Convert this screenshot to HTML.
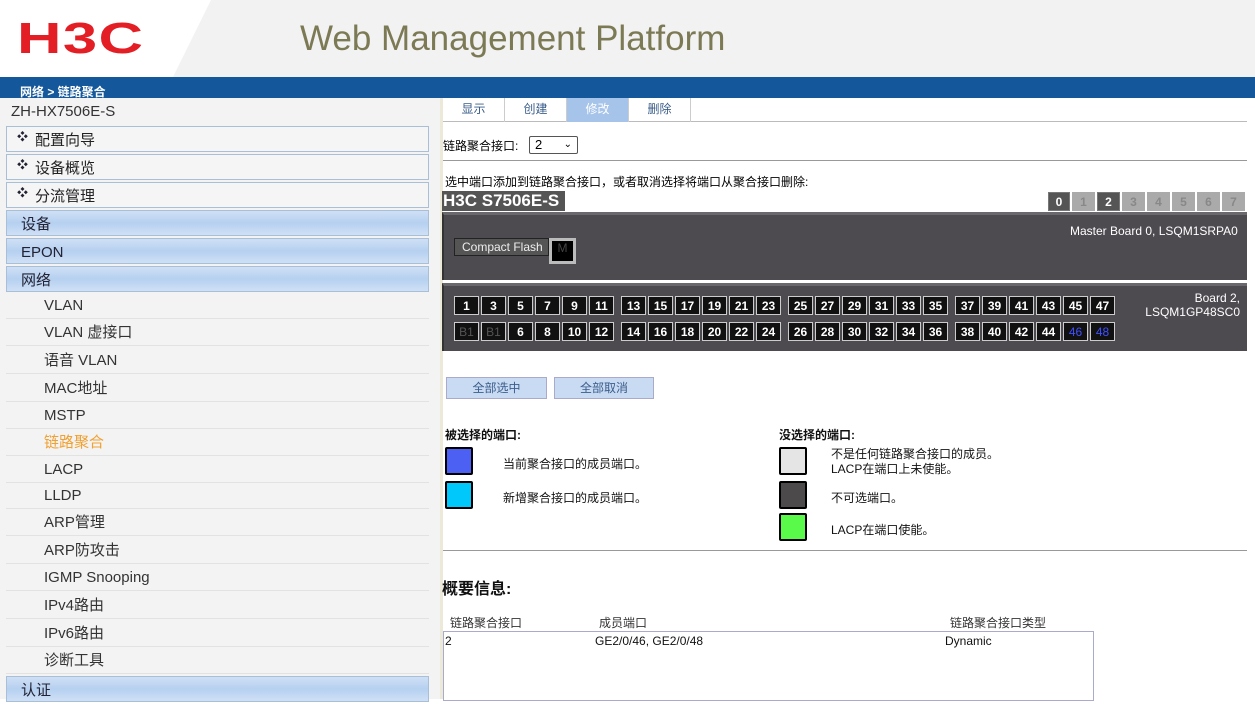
<!DOCTYPE html>
<html><head><meta charset="utf-8"><style>
*{margin:0;padding:0;box-sizing:border-box}
body{width:1255px;height:699px;overflow:hidden;background:#fff;font-family:"Liberation Sans","Noto Sans CJK SC",sans-serif;position:relative;font-size:12px;color:#000}
.a{position:absolute}
.side{left:0;top:98px;width:440px;height:601px;background:#f3f3f3}
.bx{position:absolute;left:6px;width:423px;height:26px;border:1px solid #a9bfd8;background:#f5f5f5;font-size:15px;color:#222;padding-left:28px;line-height:28px}
.bx:before{content:"❖";position:absolute;left:10px;top:-4px;font-size:11px;color:#223}
.bl{position:absolute;left:6px;width:423px;height:26px;border:1px solid #a9bfd8;background:linear-gradient(#cfe0f5,#b6d0f0 50%,#cfe0f5);font-size:15px;color:#223;padding-left:14px;line-height:28px}
.it{position:absolute;left:6px;width:423px;height:27px;border-bottom:1px solid #e2e2e2;font-size:15px;color:#333;padding-left:38px;line-height:28px}
.tab{position:absolute;top:98px;height:24px;line-height:22px;font-size:12px;color:#3a5d8a;text-align:center;border-right:1px solid #ccc}
.pg{position:absolute;display:flex;gap:2px}
.p{width:25px;height:19px;border:1px solid #ccc;background:#111;color:#fff;font:bold 12px "Liberation Sans",sans-serif;text-align:center;line-height:18px}
.sw{position:absolute;width:28px;height:28px;border:2px solid #000;border-radius:2px}
.lt{position:absolute;font-size:12px;color:#111}
</style></head><body>
<div class="a" style="left:0;top:0;width:1255px;height:77px;background:#f2f2f2"></div>
<svg class="a" style="left:0;top:0" width="240" height="77"><polygon points="0,0 211,0 173,77 0,77" fill="#fff"/></svg>
<div class="a" style="left:17px;top:14px;font:bold 44px 'Liberation Sans',sans-serif;color:#e31e24;letter-spacing:1px;transform:scaleX(1.4);transform-origin:left">H3C</div>
<div class="a" style="left:300px;top:19px;font-size:35px;color:#7c7a55">Web Management Platform</div>
<div class="a" style="left:0;top:77px;width:1255px;height:21px;background:#14579a"></div>
<div class="a" style="left:20px;top:83px;font-size:12px;color:#fff;font-weight:bold">网络 &gt; 链路聚合</div>
<div class="a side"></div>
<div class="a" style="left:11px;top:103px;font-size:15px;color:#333">ZH-HX7506E-S</div>
<div class="bx" style="top:126px">配置向导</div>
<div class="bx" style="top:154px">设备概览</div>
<div class="bx" style="top:182px">分流管理</div>
<div class="bl" style="top:210px">设备</div>
<div class="bl" style="top:238px">EPON</div>
<div class="bl" style="top:266px">网络</div>
<div class="it" style="top:292px">VLAN</div>
<div class="it" style="top:319px">VLAN 虚接口</div>
<div class="it" style="top:347px">语音 VLAN</div>
<div class="it" style="top:375px">MAC地址</div>
<div class="it" style="top:402px">MSTP</div>
<div class="it" style="top:429px;color:#f0a030">链路聚合</div>
<div class="it" style="top:456px">LACP</div>
<div class="it" style="top:482px">LLDP</div>
<div class="it" style="top:509px">ARP管理</div>
<div class="it" style="top:537px">ARP防攻击</div>
<div class="it" style="top:564px">IGMP Snooping</div>
<div class="it" style="top:592px">IPv4路由</div>
<div class="it" style="top:620px">IPv6路由</div>
<div class="it" style="top:647px">诊断工具</div>
<div class="bl" style="top:676px">认证</div>

<div class="a" style="left:440px;top:98px;width:3px;height:601px;background:#ece9d8"></div>
<div class="a" style="left:443px;top:121px;width:804px;height:1px;background:#bbb"></div>
<div class="tab" style="left:443px;width:62px">显示</div>
<div class="tab" style="left:505px;width:62px">创建</div>
<div class="tab" style="left:567px;width:62px;background:#a6c3ea;color:#fff">修改</div>
<div class="tab" style="left:629px;width:62px">删除</div>
<div class="a" style="left:443px;top:137px;font-size:12px">链路聚合接口:</div>
<div class="a" style="left:529px;top:136px;width:49px;height:18px;border:1px solid #555;border-radius:2px;font-size:13px;padding-left:5px;line-height:16px">2<span style="position:absolute;right:5px;top:0;font-size:10px">⌄</span></div>
<div class="a" style="left:443px;top:160px;width:804px;height:1px;background:#999"></div>
<div class="a" style="left:445px;top:173px;font-size:12px">选中端口添加到链路聚合接口，或者取消选择将端口从聚合接口删除:</div>
<div class="a" style="left:442px;top:191px;width:123px;height:20px;background:#555;color:#fff;font:bold 17px 'Liberation Sans',sans-serif;padding-left:1px;line-height:20px">H3C S7506E-S</div>
<div class="a" style="left:1048px;top:192px;display:flex;gap:2px">
<div class="p" style="width:22px;background:#555;border-color:#777">0</div><div class="p" style="width:23px;background:#aaa;border-color:#aaa;color:#888">1</div><div class="p" style="width:23px;background:#555;border-color:#777">2</div><div class="p" style="width:23px;background:#aaa;border-color:#aaa;color:#888">3</div><div class="p" style="width:23px;background:#aaa;border-color:#aaa;color:#888">4</div><div class="p" style="width:23px;background:#aaa;border-color:#aaa;color:#888">5</div><div class="p" style="width:23px;background:#aaa;border-color:#aaa;color:#888">6</div><div class="p" style="width:23px;background:#aaa;border-color:#aaa;color:#888">7</div></div>
<div class="a" style="left:442px;top:212px;width:805px;height:68px;background:#4d4a50;border-top:3px solid #6a676d;border-left:2px solid #333"></div>
<div class="a" style="left:1070px;top:224px;color:#fff;font-size:12px">Master Board 0, LSQM1SRPA0</div>
<div class="a" style="left:454px;top:238px;width:95px;height:18px;background:#555;border:1px solid #222;color:#eee;font-size:12px;line-height:16px;padding-left:7px">Compact Flash</div>
<div class="a" style="left:549px;top:238px;width:27px;height:26px;background:#bbb;padding:3px"><div style="background:#000;height:20px;color:#444;font-size:12px;text-align:center">M</div></div>
<div class="a" style="left:442px;top:283px;width:805px;height:68px;background:#4d4a50;border-top:3px solid #6a676d;border-left:2px solid #333"></div>
<div class="a" style="left:1130px;top:291px;color:#fff;font-size:12px;text-align:right;width:110px;line-height:14px">Board 2,<br>LSQM1GP48SC0</div>
<div class="pg" style="left:454px;top:296px"><div class="p">1</div><div class="p">3</div><div class="p">5</div><div class="p">7</div><div class="p">9</div><div class="p">11</div></div>
<div class="pg" style="left:621px;top:296px"><div class="p">13</div><div class="p">15</div><div class="p">17</div><div class="p">19</div><div class="p">21</div><div class="p">23</div></div>
<div class="pg" style="left:788px;top:296px"><div class="p">25</div><div class="p">27</div><div class="p">29</div><div class="p">31</div><div class="p">33</div><div class="p">35</div></div>
<div class="pg" style="left:955px;top:296px"><div class="p">37</div><div class="p">39</div><div class="p">41</div><div class="p">43</div><div class="p">45</div><div class="p">47</div></div>
<div class="pg" style="left:454px;top:322px"><div class="p" style="color:#555;font-weight:normal">B1</div><div class="p" style="color:#555;font-weight:normal">B1</div><div class="p">6</div><div class="p">8</div><div class="p">10</div><div class="p">12</div></div>
<div class="pg" style="left:621px;top:322px"><div class="p">14</div><div class="p">16</div><div class="p">18</div><div class="p">20</div><div class="p">22</div><div class="p">24</div></div>
<div class="pg" style="left:788px;top:322px"><div class="p">26</div><div class="p">28</div><div class="p">30</div><div class="p">32</div><div class="p">34</div><div class="p">36</div></div>
<div class="pg" style="left:955px;top:322px"><div class="p">38</div><div class="p">40</div><div class="p">42</div><div class="p">44</div><div class="p" style="color:#4050ff;font-weight:normal">46</div><div class="p" style="color:#4050ff;font-weight:normal">48</div></div>

<div class="a" style="left:446px;top:377px;width:101px;height:22px;background:#c9daf3;border:1px solid #aac;text-align:center;line-height:20px;color:#3a5d8a">全部选中</div>
<div class="a" style="left:554px;top:377px;width:100px;height:22px;background:#c9daf3;border:1px solid #aac;text-align:center;line-height:20px;color:#3a5d8a">全部取消</div>
<div class="lt" style="left:445px;top:426px;font-weight:bold">被选择的端口:</div>
<div class="lt" style="left:779px;top:426px;font-weight:bold">没选择的端口:</div>
<div class="sw" style="left:445px;top:447px;background:#4c60f4"></div>
<div class="sw" style="left:445px;top:481px;background:#00c8fa"></div>
<div class="sw" style="left:779px;top:447px;background:#e5e5e5"></div>
<div class="sw" style="left:779px;top:481px;background:#4d4a4c"></div>
<div class="sw" style="left:779px;top:513px;background:#5afa4a"></div>
<div class="lt" style="left:503px;top:455px">当前聚合接口的成员端口。</div>
<div class="lt" style="left:503px;top:489px">新增聚合接口的成员端口。</div>
<div class="lt" style="left:831px;top:447px;line-height:15px">不是任何链路聚合接口的成员。<br>LACP在端口上未使能。</div>
<div class="lt" style="left:831px;top:489px">不可选端口。</div>
<div class="lt" style="left:831px;top:521px">LACP在端口使能。</div>
<div class="a" style="left:443px;top:550px;width:804px;height:1px;background:#999"></div>
<div class="a" style="left:442px;top:575px;font-size:16px;font-weight:bold;color:#111">概要信息:</div>
<div class="lt" style="left:450px;top:614px;color:#333">链路聚合接口</div>
<div class="lt" style="left:599px;top:614px;color:#333">成员端口</div>
<div class="lt" style="left:950px;top:614px;color:#333">链路聚合接口类型</div>
<div class="a" style="left:443px;top:631px;width:651px;height:70px;border:1px solid #aac"></div>
<div class="lt" style="left:445px;top:634px">2</div>
<div class="lt" style="left:595px;top:634px">GE2/0/46, GE2/0/48</div>
<div class="lt" style="left:945px;top:634px">Dynamic</div>
</body></html>
